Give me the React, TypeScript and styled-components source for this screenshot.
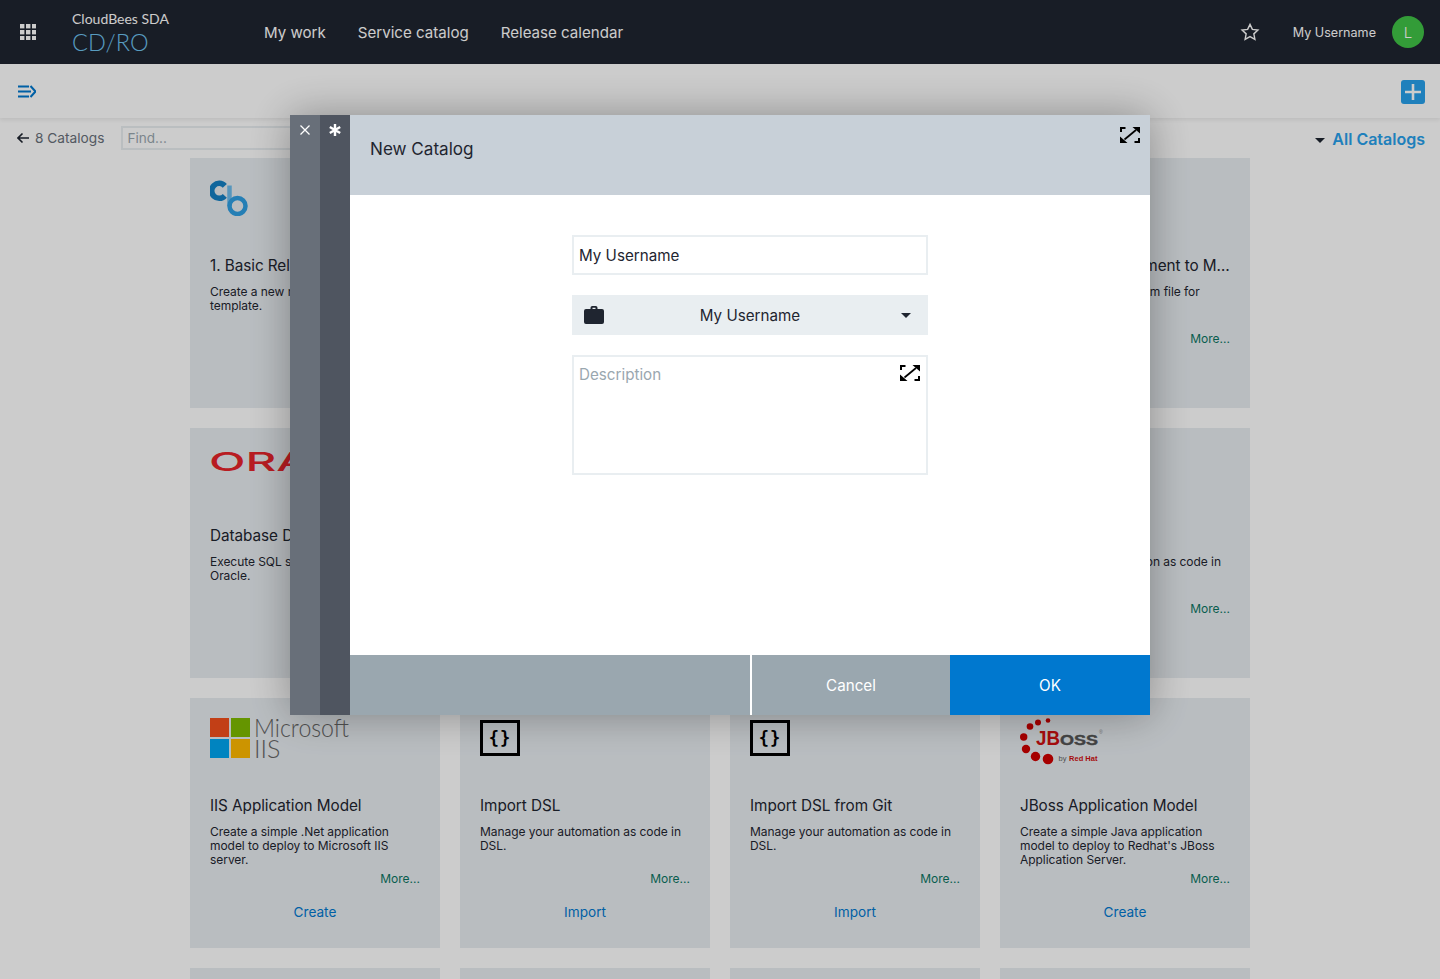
import React from "react";
import styled, { createGlobalStyle } from "styled-components";

const Global = createGlobalStyle`
  html, body { margin: 0; padding: 0; height: 100%; overflow: hidden; background: #fff; }
  * { box-sizing: border-box; }
  body { font-family: Inter, "Liberation Sans", sans-serif; color: #1f2530; }
`;

const Page = styled.div`
  height: 979px;
  overflow: hidden;
  position: relative;
  background: #fff;
  display: flex;
  flex-direction: column;
`;

const Nav = styled.header`
  flex: 0 0 64px;
  height: 64px;
  background: #1f2530;
  display: flex;
  align-items: center;
  padding: 0 16px 0 20px;
  color: #fff;
`;
const GridIcon = styled.svg`
  width: 16px;
  height: 16px;
  fill: #fff;
  flex: none;
`;
const Brand = styled.div`
  margin-left: 36px;
  width: 192px;
  display: flex;
  flex-direction: column;
  font-family: Lato, sans-serif;
  padding-top: 3px;
`;
const BrandTop = styled.span`
  font-size: 14px;
  line-height: 16px;
  color: #fff;
`;
const BrandMain = styled.span`
  font-size: 23.5px;
  line-height: 30px;
  color: #6fc3ef;
  font-weight: 300;
`;
const NavLinks = styled.nav`
  display: flex;
  gap: 32px;
  flex: 1;
`;
const NavLink = styled.a`
  font-size: 15.1px;
  color: #fff;
`;
const StarIcon = styled.svg`
  width: 20px;
  height: 20px;
  fill: none;
  stroke: #fff;
  stroke-width: 1.7;
  margin-right: 33px;
`;
const UserName = styled.span`
  font-size: 12.6px;
  color: #fff;
  margin-right: 16px;
`;
const Avatar = styled.span`
  width: 32px;
  height: 32px;
  border-radius: 50%;
  background: #40c446;
  color: #fff;
  font-size: 15px;
  font-weight: 300;
  display: flex;
  align-items: center;
  justify-content: center;
`;

const Toolbar = styled.div`
  flex: 0 0 54px;
  height: 54px;
  background: #fff;
  box-shadow: 0 2px 4px rgba(0, 0, 0, 0.08);
  display: flex;
  align-items: center;
  justify-content: space-between;
  padding: 0 15px 0 18px;
  position: relative;
`;
const MenuIcon = styled.svg`
  width: 18px;
  height: 13px;
  fill: none;
  stroke: #0078cf;
  stroke-width: 2;
`;
const AddButton = styled.button`
  width: 24px;
  height: 24px;
  border: 0;
  padding: 0;
  border-radius: 3px;
  background: #27a0eb;
  display: flex;
  align-items: center;
  justify-content: center;
  margin-top: 1px;
`;
const FilterRow = styled.div`
  height: 40px;
  flex: none;
  display: flex;
  align-items: center;
  padding: 0 15px 0 17px;
`;
const BackIcon = styled.svg`
  width: 12px;
  height: 12px;
  fill: none;
  stroke: #1f2530;
  stroke-width: 1.6;
  margin: -1px 6px 0 0;
`;
const Count = styled.span`
  font-size: 13.7px;
  color: #68707a;
  margin-top: -1px;
`;
const Find = styled.input`
  margin-left: 17px;
  width: 360px;
  height: 24px;
  border: 2px solid #e9eef1;
  background: transparent;
  font: 13.6px Inter, sans-serif;
  padding: 0 4px 1px;
  outline: 0;
  &::placeholder { color: #9aa7af; opacity: 1; }
`;
const Spacer = styled.div`
  flex: 1;
`;
const Caret = styled.span`
  width: 0;
  height: 0;
  border-left: 5px solid transparent;
  border-right: 5px solid transparent;
  border-top: 5px solid #1f2530;
  margin-right: 7px;
  margin-top: 4px;
`;
const AllLink = styled.a`
  font-size: 16px;
  font-weight: 600;
  color: #27a0eb;
  margin-top: 1px;
`;

const Cards = styled.main`
  display: grid;
  grid-template-columns: repeat(4, 250px);
  grid-auto-rows: 250px;
  gap: 20px;
  justify-content: center;
`;
const Card = styled.article`
  background: #e8edf1;
  padding: 20px;
  display: flex;
  flex-direction: column;
  min-width: 0;
`;
const LogoSlot = styled.div`
  height: 40px;
  flex: none;
  display: flex;
  align-items: flex-start;
`;
const CardTitle = styled.h3`
  margin: 38px 0 0;
  font-size: 15.3px;
  line-height: 20px;
  font-weight: 400;
  color: #1f2530;
  white-space: nowrap;
  overflow: hidden;
  text-overflow: ellipsis;
  letter-spacing: -0.06px;
`;
const CardText = styled.p`
  margin: 9px 0 0;
  font-size: 12px;
  line-height: 14px;
  height: 42px;
  color: #1f2530;
  letter-spacing: -0.05px;
`;
const More = styled.a`
  align-self: flex-end;
  font-size: 12px;
  line-height: 14px;
  margin-top: 5px;
  color: #0b7562;
`;
const Action = styled.a`
  margin-top: 16px;
  text-align: center;
  font-size: 13.6px;
  line-height: 20px;
  color: #0078cf;
`;

const Backdrop = styled.div`
  position: fixed;
  inset: 0;
  background: rgba(0, 0, 0, 0.2);
  display: flex;
  justify-content: center;
  padding-top: 115px;
`;
const Modal = styled.section`
  width: 860px;
  height: 600px;
  display: flex;
  box-shadow: 0 0 40px rgba(0, 0, 0, 0.32);
`;
const Strip = styled.button<{ $dark?: boolean }>`
  width: 30px;
  height: 100%;
  border: 0;
  padding: ${(p) => (p.$dark ? "9px" : "10px")} 0 0;
  background: ${(p) => (p.$dark ? "#4f5560" : "#686f79")};
  color: #fff;
  display: flex;
  justify-content: center;
  align-items: flex-start;
  flex: none;
`;
const ModalMain = styled.div`
  flex: 1;
  display: flex;
  flex-direction: column;
  min-width: 0;
`;
const ModalHead = styled.div`
  height: 80px;
  flex: none;
  background: #c8d0d8;
  position: relative;
  display: flex;
  align-items: center;
  padding: 0 20px 14px;
  font-size: 17.1px;
  color: #1f2530;
`;
const ExpandIcon = styled.svg`
  width: 20px;
  height: 16px;
  fill: none;
  stroke: #000;
  stroke-width: 2;
`;
const HeadExpand = styled.span`
  position: absolute;
  right: 10px;
  top: 12px;
  display: flex;
`;
const ModalBody = styled.form`
  flex: 1;
  background: #fff;
  padding: 40px 222px 0;
  display: flex;
  flex-direction: column;
  gap: 20px;
`;
const TextField = styled.input`
  height: 40px;
  border: 2px solid #e9eef1;
  padding: 0 5px;
  font: 15.2px Inter, sans-serif;
  color: #1f2530;
  outline: 0;
  width: 100%;
`;
const SelectBox = styled.div`
  height: 40px;
  background: #e9eef1;
  display: flex;
  align-items: center;
  justify-content: center;
  position: relative;
  font-size: 15.2px;
  color: #1f2530;
`;
const BagIcon = styled.svg`
  position: absolute;
  left: 12px;
  top: 10px;
  width: 20px;
  height: 20px;
  fill: #1f2530;
`;
const SelectCaret = styled.span`
  position: absolute;
  right: 17px;
  top: 18px;
  width: 0;
  height: 0;
  border-left: 5px solid transparent;
  border-right: 5px solid transparent;
  border-top: 5px solid #1f2530;
`;
const AreaWrap = styled.div`
  position: relative;
  height: 120px;
`;
const Area = styled.textarea`
  width: 100%;
  height: 100%;
  border: 2px solid #e9eef1;
  padding: 8px 5px;
  font: 15.2px/20px Inter, sans-serif;
  resize: none;
  outline: 0;
  display: block;
  &::placeholder { color: #9aa7af; opacity: 1; }
`;
const AreaExpand = styled.span`
  position: absolute;
  right: 8px;
  top: 10px;
  display: flex;
`;
const ModalFoot = styled.div`
  height: 60px;
  flex: none;
  display: flex;
  background: #9aa7af;
`;
const FootSpace = styled.div`
  width: 402px;
  border-right: 2px solid #fff;
  flex: none;
`;
const FootButton = styled.button<{ $primary?: boolean }>`
  border: 0;
  font: 15.2px Inter, sans-serif;
  color: #fff;
  background: ${(p) => (p.$primary ? "#0078cf" : "#9aa7af")};
  flex: ${(p) => (p.$primary ? "0 0 200px" : "1")};
`;

const Expand = () => (
  <ExpandIcon viewBox="0 0 20 16">
    <path d="M1 5V1h4.500M19 11v4h-4.500" strokeWidth="2" />
    <path d="M4.500 12.500 16 3" strokeWidth="1.700" />
    <path d="M12.500 0H20v6.500zM0 16V9.500L7.500 16z" fill="#000" stroke="none" />
  </ExpandIcon>
);

const CbLogo = () => (
  <svg width="38" height="38" viewBox="0 0 38 38" fill="none" aria-hidden>
    <path d="M14.800 7.800A7.500 7.500 0 1 0 14.800 17.800" stroke="#1480c4" strokeWidth="5.500" />
    <path d="M19.500 7.500V28" stroke="#6dbcec" strokeWidth="4.500" />
    <circle cx="27.500" cy="28" r="8" stroke="#2f9fe3" strokeWidth="4.500" />
  </svg>
);

const OracleLogo = () => (
  <svg width="200" height="40" viewBox="0 0 200 40" aria-hidden>
    <text x="-1" y="23" fontFamily="Inter" fontWeight="500" fontSize="26" fill="#e6232a" textLength="190" lengthAdjust="spacingAndGlyphs">ORACLE</text>
  </svg>
);

const MsLogo = () => (
  <svg width="145" height="44" viewBox="0 0 145 44" aria-hidden>
    <rect width="19" height="19" fill="#f34f1c" />
    <rect x="21" width="19" height="19" fill="#7fbb00" />
    <rect y="21" width="19" height="19" fill="#01a6f0" />
    <rect x="21" y="21" width="19" height="19" fill="#ffb900" />
    <text x="44" y="19" fontFamily="Lato" fontWeight="300" fontSize="25" fill="#666" textLength="95" lengthAdjust="spacingAndGlyphs">Microsoft</text>
    <text x="44" y="40" fontFamily="Lato" fontWeight="300" fontSize="25" fill="#666">IIS</text>
  </svg>
);

const CodeBox = styled.div`
  width: 40px;
  height: 36px;
  margin-top: 2px;
  border: 3.5px solid #000;
  display: flex;
  align-items: center;
  justify-content: center;
  font: 700 17px/1 "DejaVu Sans Mono", monospace;
  color: #000;
  letter-spacing: 1px;
`;

const JBossLogo = () => (
  <svg width="90" height="48" viewBox="0 0 90 48" aria-hidden>
    <g fill="#d00000">
      <circle cx="28" cy="2.500" r="2.300" />
      <circle cx="18" cy="4.500" r="3" />
      <circle cx="10" cy="8.500" r="3.300" />
      <circle cx="3.700" cy="19" r="3.700" />
      <circle cx="6" cy="31" r="4.200" />
      <circle cx="15.500" cy="38.500" r="4.700" />
      <circle cx="28" cy="41" r="5.300" />
    </g>
    <text x="16" y="27" fontFamily="Liberation Sans" fontWeight="700" fontSize="21" fill="#d01010" textLength="24" lengthAdjust="spacingAndGlyphs">JB</text>
    <text x="40" y="27" fontFamily="Liberation Sans" fontWeight="700" fontSize="14.500" fill="#555" stroke="#555" strokeWidth="0.400" textLength="38" lengthAdjust="spacingAndGlyphs">OSS</text>
    <text x="79" y="16" fontFamily="Liberation Sans" fontSize="5" fill="#8a8a8a">®</text>
    <text x="38.500" y="43" fontFamily="Liberation Sans" fontSize="7.500" fill="#666">by</text>
    <text x="49" y="43" fontFamily="Liberation Sans" fontWeight="700" fontSize="7.500" fill="#d01010" textLength="28.500">Red Hat</text>
  </svg>
);

type Item = { logo?: React.ReactNode; title: string; text: string; action: string };

const code = <CodeBox>{"{}"}</CodeBox>;

const items: Item[] = [
  { logo: <CbLogo />, title: "1. Basic Release Pipeline", text: "Create a new release from a simple template.", action: "Create" },
  { title: "Application Template", text: "Create a new application model from a template.", action: "Create" },
  { title: "Continuous Delivery", text: "Create a new pipeline from a template.", action: "Create" },
  { title: "Container Deployment to Maven", text: "Deploy your artifact from file for", action: "Create" },
  { logo: <OracleLogo />, title: "Database Deployment", text: "Execute SQL scripts in a database on Oracle.", action: "Create" },
  { title: "Docker Application", text: "Create a simple Docker application.", action: "Create" },
  { title: "Kubernetes Application", text: "Create a simple application model.", action: "Create" },
  { title: "DSL", text: "Manage your automation as code in DSL.", action: "Import" },
  { logo: <MsLogo />, title: "IIS Application Model", text: "Create a simple .Net application model to deploy to Microsoft IIS server.", action: "Create" },
  { logo: code, title: "Import DSL", text: "Manage your automation as code in DSL.", action: "Import" },
  { logo: code, title: "Import DSL from Git", text: "Manage your automation as code in DSL.", action: "Import" },
  { logo: <JBossLogo />, title: "JBoss Application Model", text: "Create a simple Java application model to deploy to Redhat's JBoss Application Server.", action: "Create" },
  { title: "Tomcat", text: "", action: "Create" },
  { title: "WebLogic", text: "", action: "Create" },
  { title: "WebSphere", text: "", action: "Create" },
  { title: "Windows", text: "", action: "Create" },
];

export default function App() {
  return (
    <Page>
      <Global />
      <Nav>
        <GridIcon viewBox="0 0 16 16">
          {[0, 6, 12].flatMap((y) =>
            [0, 6, 12].map((x) => <rect key={`${x}-${y}`} x={x} y={y} width="4.400" height="4.400" />)
          )}
        </GridIcon>
        <Brand>
          <BrandTop>CloudBees SDA</BrandTop>
          <BrandMain>CD/RO</BrandMain>
        </Brand>
        <NavLinks>
          <NavLink>My work</NavLink>
          <NavLink>Service catalog</NavLink>
          <NavLink>Release calendar</NavLink>
        </NavLinks>
        <StarIcon viewBox="0 0 24 24">
          <path d="M12 2.800l2.850 6.050 6.650.85-4.900 4.550 1.280 6.550L12 17.600l-5.880 3.200 1.280-6.550L2.500 9.700l6.650-.85z" />
        </StarIcon>
        <UserName>My Username</UserName>
        <Avatar>L</Avatar>
      </Nav>
      <Toolbar>
        <MenuIcon viewBox="0 0 18 13">
          <path d="M0 1.500h11M0 6.500h13M0 11.500h11M12.500 1 17.500 6.500l-5 5.500" />
        </MenuIcon>
        <AddButton aria-label="Add">
          <svg width="18" height="18" viewBox="0 0 18 18" fill="none" stroke="#fff" strokeWidth="2.600">
            <path d="M9 1v16M1 9h16" />
          </svg>
        </AddButton>
      </Toolbar>
      <FilterRow>
        <BackIcon viewBox="0 0 12 12">
          <path d="M12 6H1M5.500 1.500 1 6l4.500 4.500" />
        </BackIcon>
        <Count>8 Catalogs</Count>
        <Find placeholder="Find..." />
        <Spacer />
        <Caret />
        <AllLink>All Catalogs</AllLink>
      </FilterRow>
      <Cards>
        {items.map((c) => (
          <Card key={c.title}>
            <LogoSlot>{c.logo}</LogoSlot>
            <CardTitle>{c.title}</CardTitle>
            <CardText>{c.text}</CardText>
            <More>More...</More>
            <Action>{c.action}</Action>
          </Card>
        ))}
      </Cards>
      <Backdrop>
        <Modal role="dialog">
          <Strip aria-label="Close">
            <svg width="10" height="10" viewBox="0 0 10 10" stroke="#fff" strokeWidth="1.300">
              <path d="M.5.5l9 9M9.500.5l-9 9" />
            </svg>
          </Strip>
          <Strip $dark aria-label="Required">
            <svg width="12" height="12" viewBox="0 0 12 12" stroke="#fff" strokeWidth="2.400">
              <path d="M6 0v12M.8 3l10.400 6M11.200 3 .8 9" />
            </svg>
          </Strip>
          <ModalMain>
            <ModalHead>
              New Catalog
              <HeadExpand><Expand /></HeadExpand>
            </ModalHead>
            <ModalBody>
              <TextField defaultValue="My Username" />
              <SelectBox>
                <BagIcon viewBox="0 0 20 20">
                  <path d="M6.500 4V2.800A1.800 1.800 0 0 1 8.300 1h3.400a1.800 1.800 0 0 1 1.800 1.800V4H18a2 2 0 0 1 2 2v11a2 2 0 0 1-2 2H2a2 2 0 0 1-2-2V6a2 2 0 0 1 2-2zm2 0h3V2.800h-3z" fillRule="evenodd" />
                </BagIcon>
                My Username
                <SelectCaret />
              </SelectBox>
              <AreaWrap>
                <Area placeholder="Description" />
                <AreaExpand><Expand /></AreaExpand>
              </AreaWrap>
            </ModalBody>
            <ModalFoot>
              <FootSpace />
              <FootButton>Cancel</FootButton>
              <FootButton $primary>OK</FootButton>
            </ModalFoot>
          </ModalMain>
        </Modal>
      </Backdrop>
    </Page>
  );
}
